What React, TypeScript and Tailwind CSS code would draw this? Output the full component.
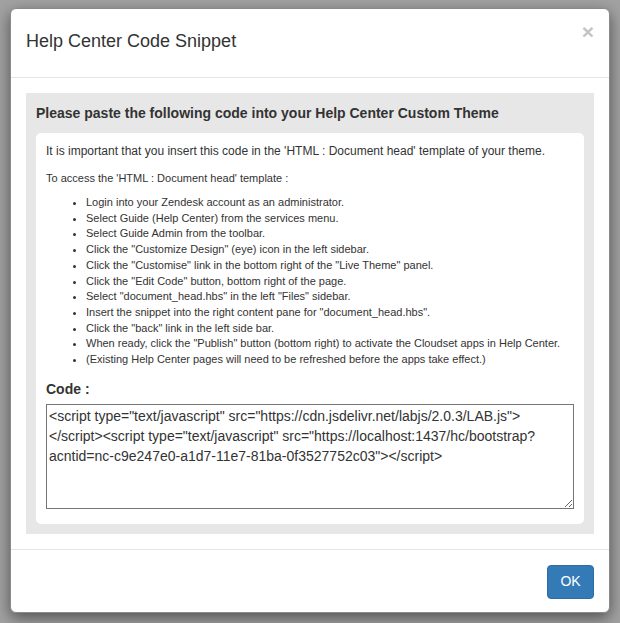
import React from "react";

const steps = [
  "Login into your Zendesk account as an administrator.",
  "Select Guide (Help Center) from the services menu.",
  "Select Guide Admin from the toolbar.",
  'Click the "Customize Design" (eye) icon in the left sidebar.',
  'Click the "Customise" link in the bottom right of the "Live Theme" panel.',
  'Click the "Edit Code" button, bottom right of the page.',
  'Select "document_head.hbs" in the left "Files" sidebar.',
  'Insert the snippet into the right content pane for "document_head.hbs".',
  'Click the "back" link in the left side bar.',
  'When ready, click the "Publish" button (bottom right) to activate the Cloudset apps in Help Center.',
  "(Existing Help Center pages will need to be refreshed before the apps take effect.)",
];

const code =
  '<script type="text/javascript" src="https://cdn.jsdelivr.net/labjs/2.0.3/LAB.js"></script><script type="text/javascript" src="https://localhost:1437/hc/bootstrap?acntid=nc-c9e247e0-a1d7-11e7-81ba-0f3527752c03"></script>';

export default function App() {
  return (
    <div
      className="w-[620px] h-[623px] bg-[#a2a2a2] pt-[8px] pl-[10px]"
      style={{ fontFamily: '"Liberation Sans", Arial, sans-serif' }}
    >
      <div className="w-[600px] h-[605px] bg-white border border-[#8a8a8a] rounded-[6px] shadow-[0_5px_15px_rgba(0,0,0,0.5)] flex flex-col text-[#333]">
        <div className="h-[69px] shrink-0 border-b border-[#e5e5e5] px-[15px] flex items-start justify-between">
          <h4 className="text-[18px] leading-[26px] pt-[19px] font-normal">Help Center Code Snippet</h4>
          <button className="text-[21px] font-bold text-[#c4c4c4] leading-none pt-[12px] pr-0">×</button>
        </div>
        <div className="p-[15px]">
          <div className="bg-[#e7e7e7] p-[10px]">
            <h3 className="text-[14px] font-bold leading-[21px] mb-[9px]">
              Please paste the following code into your Help Center Custom Theme
            </h3>
            <div className="bg-white rounded-[5px] px-[10px] pt-[10px] pb-[15px]">
              <p className="text-[12px] leading-[17px] mb-[10px]">
                It is important that you insert this code in the 'HTML : Document head' template of your theme.
              </p>
              <p className="text-[11px] leading-[16px] mb-[9px]">To access the 'HTML : Document head' template :</p>
              <ul className="list-disc pl-[40px] text-[11px] leading-[15.7px] mb-[11px]">
                {steps.map((s) => (
                  <li key={s}>{s}</li>
                ))}
              </ul>
              <label className="block text-[14px] font-bold leading-[20px] mb-[5px]">Code :</label>
              <textarea
                readOnly
                defaultValue={code}
                className="block w-[528px] h-[105px] border border-[#767676] text-[14px] leading-[20px] px-[2px] py-[1px] text-[#333] resize-y"
                style={{ fontFamily: '"Liberation Sans", Arial, sans-serif' }}
              />
            </div>
          </div>
        </div>
        <div className="border-t border-[#e5e5e5] px-[15px] pt-[15px] flex justify-end">
          <button className="h-[34px] px-[12px] bg-[#337ab7] border border-[#2e6da4] rounded-[4px] text-white text-[14px] w-[47px]">
            OK
          </button>
        </div>
      </div>
    </div>
  );
}
